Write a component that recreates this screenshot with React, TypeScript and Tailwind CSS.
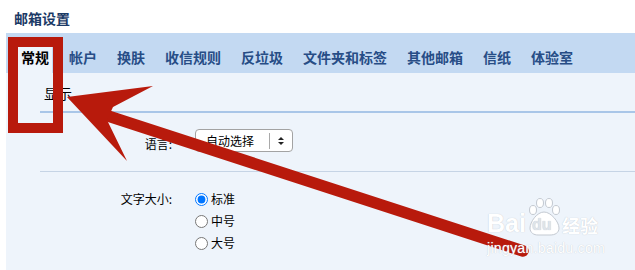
const cjk = "font-['Microsoft_YaHei','Noto_Sans_CJK_SC',sans-serif]";

const tabs = ["帐户", "换肤", "收信规则", "反垃圾", "文件夹和标签", "其他邮箱", "信纸", "体验室"];

function SelectBox() {
  return (
    <div className="flex h-[23px] w-[98px] items-center rounded-[4px] border border-[#a3a3a3] bg-white">
      <span className="pl-[10px] text-[12px] text-black">自动选择</span>
      <span className="ml-auto h-[16px] w-px bg-[#a9a9a9]" />
      <svg width="22" height="12" viewBox="0 0 22 12">
        <path d="M8 5 L11 2 L14 5 Z" fill="#222" />
        <path d="M8 7 L11 10 L14 7 Z" fill="#222" />
      </svg>
    </div>
  );
}

function Radio({ label, checked }: { label: string; checked?: boolean }) {
  return (
    <label className="flex h-[22px] items-center gap-[3px]">
      <input type="radio" name="size" defaultChecked={checked} className="m-0 h-[13px] w-[13px]" />
      <span className="text-[12px] text-black">{label}</span>
    </label>
  );
}

function Watermark() {
  return (
    <div className="absolute left-[487px] top-[198px] flex flex-col items-start text-white [text-shadow:0_0_1px_#b9c0c9]">
      <div className="flex items-end">
        <span className="font-['Liberation_Sans',sans-serif] text-[25px] font-bold leading-[26px]">Bai</span>
        <div className="relative ml-[1px] h-[38px] w-[34px]">
          <svg className="absolute inset-0" width="34" height="38" viewBox="0 0 34 38">
            <g fill="#fff" stroke="#c3c9d1" strokeWidth="1">
              <ellipse cx="6" cy="12" rx="3.5" ry="4.5" />
              <ellipse cx="13" cy="5" rx="3.5" ry="4.5" />
              <ellipse cx="22" cy="5" rx="3.5" ry="4.5" />
              <ellipse cx="29" cy="12" rx="3.5" ry="4.5" />
              <path d="M17 14 C10 14 3 24 3 30 C3 35 7 37 11 37 L23 37 C28 37 32 35 32 30 C32 24 24 14 17 14 Z" />
            </g>
          </svg>
          <span className="absolute left-[5px] top-[18px] font-['Liberation_Sans',sans-serif] text-[16px] font-bold leading-[18px] text-[#dfe4ea]">du</span>
        </div>
        <span className={`${cjk} ml-[1px] text-[18px] font-bold leading-[22px]`}>经验</span>
      </div>
      <span className="mt-[5px] font-['Liberation_Sans',sans-serif] text-[14px] leading-[14px] tracking-[0.3px]">jingyan.baidu.com</span>
    </div>
  );
}

export default function App() {
  return (
    <div className={`${cjk} relative h-[270px] w-[635px] overflow-hidden bg-white`}>
      <div className="flex h-[33px] items-center pl-[14px] pt-[4px]">
        <span className="text-[14px] font-bold text-[#1b3a66]">邮箱设置</span>
      </div>

      <div className="ml-[6px]">
        <div className="flex h-[40px] items-end gap-[14px] bg-[#c3d9f2] pl-[12px]">
          <div className="flex h-[33px] items-center bg-[#eef4fb] px-[3px] pt-[2px] text-[14px] font-bold text-black">
            常规
          </div>
          {tabs.map((t) => (
            <div key={t} className="flex h-[33px] items-center px-[3px] pt-[2px] text-[14px] font-bold text-[#274d86]">
              {t}
            </div>
          ))}
        </div>

        <div className="h-[197px] bg-[#eef4fb] pl-[34px]">
          <div className="flex h-[38px] items-end pb-[7px] pl-[4px]">
            <span className="text-[14px] text-black">显示</span>
          </div>
          <div className="h-[2px] bg-[#a9c6e8]" />

          <div className="flex h-[58px] items-center">
            <span className="w-[132px] pt-[3px] text-right text-[12px] text-black">语言:</span>
            <div className="ml-[23px] mt-[-3px]">
              <SelectBox />
            </div>
          </div>
          <div className="h-px bg-[#c6d4e5]" />

          <div className="flex pt-[16px]">
            <span className="flex h-[22px] w-[132px] items-center justify-end text-[12px] text-black">文字大小:</span>
            <div className="ml-[23px] flex flex-col">
              <Radio label="标准" checked />
              <Radio label="中号" />
              <Radio label="大号" />
            </div>
          </div>
        </div>
      </div>

      <div className="pointer-events-none absolute left-[8px] top-[37px] h-[96px] w-[55px] border-[10px] border-[#b81a0c]" />

      <svg className="pointer-events-none absolute inset-0" width="635" height="270" viewBox="0 0 635 270">
        <line x1="105" y1="115" x2="523" y2="251" stroke="#b81a0c" strokeWidth="11.5" strokeLinecap="round" />
        <polygon points="67,97 153,86 113,107 107,120 127,161" fill="#b81a0c" />
      </svg>

      <Watermark />
    </div>
  );
}
